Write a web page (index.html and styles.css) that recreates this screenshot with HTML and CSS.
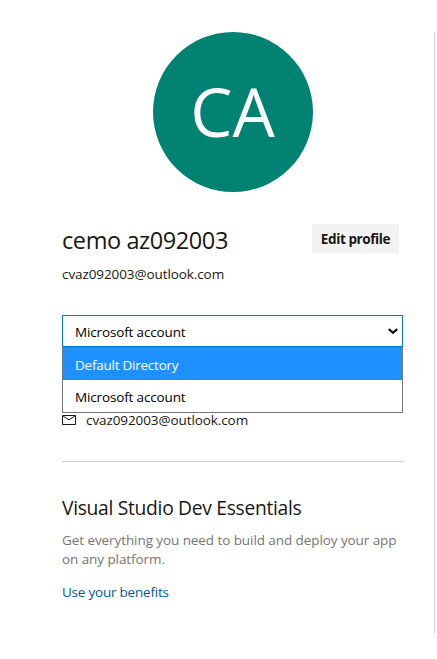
FILE: index.html
```html
<!DOCTYPE html>
<html lang="en">
<head>
<meta charset="utf-8">
<title>Profile</title>
<link rel="stylesheet" href="styles.css">
</head>
<body>
<aside class="profile">
  <div class="avatar"><span class="initials">CA</span></div>
  <div class="identity">
    <h1 class="name"><span>cemo az092003</span></h1>
    <button class="edit" type="button"><span>Edit profile</span></button>
  </div>
  <p class="email"><span>cvaz092003@outlook.com</span></p>
  <div class="picker">
    <div class="selected">
      <span>Microsoft account</span>
      <svg class="chevron" width="10" height="7" viewBox="0 0 10 7"><path d="M.8 1.2 5 4.9 9.2 1.2" fill="none" stroke="#111" stroke-width="2.2"/></svg>
    </div>
    <div class="options">
      <div class="option active"><span class="dir">Default Directory</span></div>
      <div class="option"><span class="account">Microsoft account</span></div>
    </div>
  </div>
  <div class="contact">
    <svg class="mail" width="14" height="10" viewBox="0 0 14 10"><path d="M.5 .5h13v9H.5zM1 1l6 3.8L13 1" fill="none" stroke="#171717"/></svg>
    <span>cvaz092003@outlook.com</span>
  </div>
  <section class="essentials">
    <h2 class="title"><span>Visual Studio Dev Essentials</span></h2>
    <p class="about"><span>Get everything you need to build and deploy your app</span><br><span>on any platform.</span></p>
    <a class="benefits" href="#"><span>Use your benefits</span></a>
  </section>
</aside>
</body>
</html>
```
FILE: styles.css
```css
* { box-sizing: border-box; }
body {
  margin: 0;
  background: #fff;
  color: #171717;
  font: 13.5px/20px "Open Sans", "Noto Sans", sans-serif;
  letter-spacing: -0.09px;
  overflow: hidden;
}
h1, h2, p { margin: 0; font-weight: 400; }
.profile {
  width: 435px;
  height: 601px;
  margin-top: 32px;
  padding: 0 31px 0 62px;
  border-right: 1px solid #ccc;
}
.avatar {
  display: flex;
  align-items: center;
  justify-content: center;
  width: 160px;
  height: 160px;
  margin: 0 auto;
  padding-bottom: 3px;
  border-radius: 50%;
  background: #008272;
  color: #fff;
}
.initials { font-size: 67px; line-height: 80px; letter-spacing: 0; }
.identity {
  display: flex;
  justify-content: space-between;
  height: 32px;
  margin-top: 32px;
  padding-right: 4px;
}
.name { font-size: 23.5px; line-height: 32px; letter-spacing: -0.4px; }
.edit {
  width: 87px;
  height: 29px;
  padding: 0;
  border: 0;
  background: #f2f2f2;
  color: #171717;
  font: 700 13.5px/30px "Open Sans", "Noto Sans", sans-serif;
  letter-spacing: -0.4px;
}
.email { margin-top: 8px; }
.picker { height: 98px; margin-top: 31px; color: #000; letter-spacing: -0.15px; }
.selected {
  display: flex;
  align-items: center;
  justify-content: space-between;
  height: 32px;
  padding: 1px 4px 0 12px;
  border: 1px solid #0078d4;
}
.chevron { margin-bottom: 1px; }
.options { height: 66px; border: 1px solid #767676; background: #fff; }
.option { height: 32px; padding-left: 12px; line-height: 34px; }
.active { line-height: 35px; background: #1e90ff; color: #fff; }
.dir { letter-spacing: -0.24px; }
.contact { display: flex; align-items: center; gap: 10px; height: 14px; }
.essentials { margin-top: 34px; border-top: 1px solid #ccc; }
.title { margin-top: 34px; font-size: 19.25px; line-height: 24px; letter-spacing: -0.3px; }
.about { margin-top: 11px; color: #757575; line-height: 19px; white-space: nowrap; letter-spacing: -0.08px; }
.benefits { display: block; margin-top: 13px; color: #005a9e; text-decoration: none; letter-spacing: -0.22px; }
```
